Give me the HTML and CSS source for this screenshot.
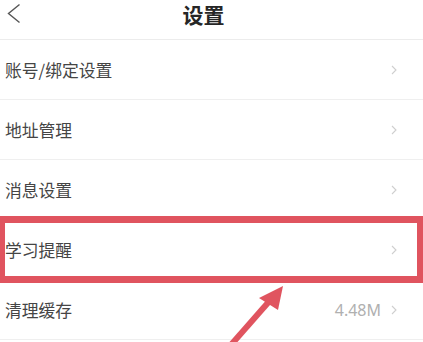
FILE: index.html
```html
<!DOCTYPE html>
<html lang="zh">
<head>
<meta charset="utf-8">
<title>设置</title>
<link rel="stylesheet" href="styles.css">
</head>
<body>
<div class="page">
  <header class="header">
    <svg class="back" width="14" height="22" viewBox="0 0 14 22"><polyline points="12.5,1.5 1.5,10.5 12.5,19.5" fill="none" stroke="#555" stroke-width="1.4"/></svg>
    <h1 class="title">设置</h1>
  </header>
  <ul class="list">
    <li class="row"><span class="label">账号/绑定设置</span><span class="right"><svg class="chev" width="6" height="10" viewBox="0 0 6 10"><polyline points="1,1 5,5 1,9" fill="none" stroke="#cfcfcf" stroke-width="1.1"/></svg></span></li>
    <li class="row"><span class="label">地址管理</span><span class="right"><svg class="chev" width="6" height="10" viewBox="0 0 6 10"><polyline points="1,1 5,5 1,9" fill="none" stroke="#cfcfcf" stroke-width="1.1"/></svg></span></li>
    <li class="row"><span class="label">消息设置</span><span class="right"><svg class="chev" width="6" height="10" viewBox="0 0 6 10"><polyline points="1,1 5,5 1,9" fill="none" stroke="#cfcfcf" stroke-width="1.1"/></svg></span></li>
    <li class="row"><span class="label">学习提醒</span><span class="right"><svg class="chev" width="6" height="10" viewBox="0 0 6 10"><polyline points="1,1 5,5 1,9" fill="none" stroke="#cfcfcf" stroke-width="1.1"/></svg></span></li>
    <li class="row"><span class="label">清理缓存</span><span class="right"><span class="value">4.48M</span><svg class="chev" width="6" height="10" viewBox="0 0 6 10"><polyline points="1,1 5,5 1,9" fill="none" stroke="#cfcfcf" stroke-width="1.1"/></svg></span></li>
  </ul>
  <div class="highlight"></div>
  <svg class="arrow" width="423" height="342" viewBox="0 0 423 342">
    <line x1="230" y1="346" x2="273" y2="297" stroke="#e0545f" stroke-width="6"/>
    <polygon points="283,286 259,298 278,310" fill="#e0545f"/>
  </svg>
</div>
</body>
</html>
```

FILE: styles.css
```css
html, body {
  margin: 0;
  padding: 0;
  background: #fff;
}
.page {
  position: relative;
  width: 423px;
  height: 342px;
  overflow: hidden;
  font-family: "Noto Sans CJK SC", "Noto Sans", sans-serif;
}
.header {
  height: 39px;
  border-bottom: 1px solid #ececec;
  display: flex;
  align-items: flex-start;
  justify-content: center;
  position: relative;
}
.back {
  position: absolute;
  left: 7px;
  top: 3px;
}
.title {
  margin: 0 0 0 -16px;
  font-size: 21px;
  line-height: 29px;
  font-weight: 700;
  color: #262626;
}
.list {
  list-style: none;
  margin: 0;
  padding: 0;
}
.row {
  height: 59px;
  border-bottom: 1px solid #efefef;
  display: flex;
  align-items: center;
  justify-content: space-between;
  padding: 0 26px 0 5px;
}
.label {
  font-size: 16.8px;
  color: #454545;
}
.right {
  display: flex;
  align-items: center;
  gap: 10px;
}
.value {
  font-size: 16px;
  color: #b0b0b0;
  font-family: "Noto Sans", sans-serif;
}
.chev {
  display: block;
}
.highlight {
  position: absolute;
  left: -2px;
  top: 216px;
  width: 426px;
  height: 67px;
  border: 7px solid #e0545f;
  box-sizing: border-box;
}
.arrow {
  position: absolute;
  left: 0;
  top: 0;
}
```
